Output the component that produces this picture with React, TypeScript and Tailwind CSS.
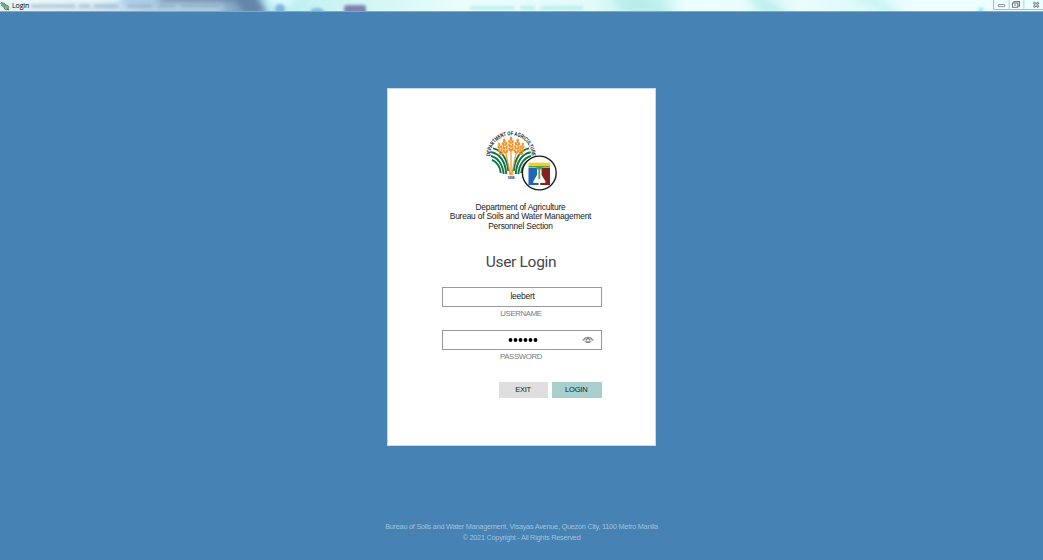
import type { ReactNode } from "react";

function AppIcon() {
  return (
    <svg className="h-[11px] w-[10px] shrink-0" viewBox="0 0 10 11">
      <path d="M0 3 3 2 6 5 4 7 1 5Z" fill="#7fb38a" />
      <path d="M1 2 4 5M4 3 7 6M1 5 5 8" stroke="#4d7f60" strokeWidth=".8" />
      <circle cx="6.4" cy="7.5" r="2.3" fill="#86b583" stroke="#5c7b70" strokeWidth=".8" />
      <path d="m7 9 2 1" stroke="#3d5262" />
    </svg>
  );
}

function TitleBar() {
  return (
    <header className="relative flex h-3 shrink-0 justify-between overflow-hidden border-b border-[#8fa6ae] bg-[linear-gradient(90deg,#e4f3f7_0px,#dcebf3_60px,#c7deec_120px,#a5c6e0_160px,#8fb0cf_225px,#7394b5_252px,#b5e5ee_268px,#c5f3f2_310px,#daf8f7_400px,#eafffc_470px,#e2fbfa_590px,#c5f1ef_635px,#c5f1ef_660px,#ebfffd_685px,#eafefd_740px,#d2f6f4_765px,#e9fefd_800px,#daf9f8_870px,#efffff_920px,#ecffff_1043px)]">
      <svg className="absolute inset-0 h-[11px] w-full" viewBox="0 0 1043 11" preserveAspectRatio="none">
        <defs>
          <filter id="glass" x="-20%" y="-100%" width="140%" height="300%">
            <feGaussianBlur stdDeviation="3" />
          </filter>
          <filter id="glassSmall" x="-20%" y="-100%" width="140%" height="300%">
            <feGaussianBlur stdDeviation="1.5" />
          </filter>
        </defs>
        <g filter="url(#glass)">
          <path d="M130-3H165L145 4H100Z" fill="#a4cce8" />
          <path d="M232-4H254L268 14H246Z" fill="#6485a8" />
          <path d="M160-4H235L245 1H158Z" fill="#5c7d9e" />
          <path d="M0-6H120V2H0Z" fill="#eefcff" />
          <path d="M150 5H222V13H145Z" fill="#b3cfe4" />
          <path d="M262-4H300L290 6H274Z" fill="#d7fcff" />
          <path d="M608-4H640L675 15H628Z" fill="#b5ebe8" opacity=".7" />
          <path d="M746-4H760L792 15H766Z" fill="#bff0ef" />
          <path d="M850-4H875L905 15H887Z" fill="#ccf5f4" />
        </g>
        <g filter="url(#glassSmall)">
          <rect x="344" y="5" width="22" height="10" rx="3" fill="#7f83b2" />
          <circle cx="280" cy="9" r="5" fill="#80b5de" />
          <ellipse cx="317" cy="11" rx="7" ry="3" fill="#80b9df" />
          <circle cx="981" cy="10" r="3" fill="#9feaff" />
          <path d="M470 8H515M520 8H535M540 8H583" stroke="#b0eaec" strokeWidth="3" />
          <path d="M31 6H75M79 6H90M94 6H118M127 6H152M158 6H175M181 6H220" stroke="#86a3bc" strokeWidth="3" opacity=".55" />
        </g>
      </svg>
      <div className="relative flex items-start">
        <AppIcon />
        <span className="ml-[2px] mt-px font-['Open_Sans',sans-serif] text-[7px] leading-[10px] tracking-[-0.1px] text-black">Login</span>
      </div>
      <div className="relative flex h-[10px] w-[50px] rounded-bl-[2px] border-b border-l border-[#a5bec3]">
        <svg className="h-[10px] w-[50px]" viewBox="0 0 50 10" fill="none">
          <path d="M15.5 0V9M30.5 0V9" stroke="#b5cfd2" />
          <rect x="4.5" y="4.5" width="6.5" height="2.2" rx=".5" fill="#fff" stroke="#747e88" strokeWidth=".8" />
          <rect x="20.5" y="1.5" width="5.5" height="4.5" fill="#eef" stroke="#70707f" />
          <rect x="18.8" y="3" width="5.5" height="4.3" fill="#fff" stroke="#70707f" />
          <path d="M20.5 5H22.5" stroke="#70707f" />
          <path d="m40.5 2.3 5 4.8m0-4.8-5 4.8" stroke="#6d7580" strokeWidth="2.4" />
          <path d="m40.8 2.6 4.4 4.2m0-4.2-4.4 4.2" stroke="#eff8fb" strokeWidth=".9" />
        </svg>
      </div>
    </header>
  );
}

function Seals() {
  return (
    <svg className="h-[70px] w-[84px]" viewBox="0 0 84 70" fill="none">
      <defs>
        <path id="sealArc" d="M10.3 30A20.7 20.7 0 0 1 51.7 30V34" />
        <g id="wheat" fill="#f2932a">
          <ellipse cx="0" cy="-13.2" rx="1.3" ry="2.4" />
          <ellipse cx="-1.4" cy="-10" rx="1.2" ry="2.1" transform="rotate(-28 -1.4 -10)" />
          <ellipse cx="1.4" cy="-10" rx="1.2" ry="2.1" transform="rotate(28 1.4 -10)" />
          <ellipse cx="-1.4" cy="-6.3" rx="1.2" ry="2.1" transform="rotate(-28 -1.4 -6.3)" />
          <ellipse cx="1.4" cy="-6.3" rx="1.2" ry="2.1" transform="rotate(28 1.4 -6.3)" />
          <ellipse cx="-1.3" cy="-2.6" rx="1.2" ry="2.1" transform="rotate(-28 -1.3 -2.6)" />
          <ellipse cx="1.3" cy="-2.6" rx="1.2" ry="2.1" transform="rotate(28 1.3 -2.6)" />
        </g>
        <g id="leaves" stroke="#0d7344" strokeWidth="1.9">
          <path d="M28.2 45C27.4 33 21.5 23.8 13 22.4" />
          <path d="M26.2 48C25.6 36 20 27.6 11.2 26.2" />
          <path d="M23.6 48C23 39 18 31.6 11 30" />
          <path d="M20.8 47C20.3 41 16.7 35.5 12 33.8" />
        </g>
      </defs>
      <text className="fill-[#111] font-['Liberation_Sans',sans-serif] text-[5.7px] font-bold">
        <textPath href="#sealArc" textLength="64.5" lengthAdjust="spacingAndGlyphs">DEPARTMENT OF AGRICULTURE</textPath>
      </text>
      <use href="#leaves" />
      <use href="#leaves" transform="translate(62 0) scale(-1 1)" />
      <path d="M31 24V49M25.7 26C26.7 33 29 39 30 49M36.3 26C35.3 33 33 39 32 49" stroke="#f29c3a" strokeWidth="1.3" />
      <use href="#wheat" transform="translate(31 26)" />
      <use href="#wheat" transform="translate(25.9 28) rotate(-7)" />
      <use href="#wheat" transform="translate(36.1 28) rotate(7)" />
      <use href="#wheat" transform="translate(21.6 29.5) rotate(-12) scale(.85)" />
      <use href="#wheat" transform="translate(40.4 29.5) rotate(12) scale(.85)" />
      <text x="31" y="53" textAnchor="middle" className="fill-[#222] font-['Liberation_Sans',sans-serif] text-[3.2px] font-bold">1898</text>
      <circle cx="59.3" cy="47" r="16.9" fill="#fff" stroke="#191919" strokeWidth="1.35" />
      <path d="M48.5 41.8H58.6V59H48.5Z" fill="#2165b5" />
      <path d="M60.2 41.8H70V59H60.2Z" fill="#85211e" />
      <path d="M48.5 36.6H70V40H48.5Z" fill="#f5cf18" />
      <path d="M48.5 40H70V41.5H48.5Z" fill="#4aa35e" />
      <path d="M57 41.5H61.6V49L65.4 55.2Q66 57 64.5 57H54.2Q52.6 57 53.4 55.2L57 49Z" fill="#fff" />
      <path d="M56.5 41V43.4H58.4V53H60.2V43.4H62.1V41Z" fill="#4aa65c" />
    </svg>
  );
}

function Eye() {
  return (
    <svg className="h-2 w-3" viewBox="0 0 12 8" fill="none" stroke="#777">
      <path d="M.7 4.2C3 .3 9 .3 11.3 4.2" strokeWidth="1" />
      <path d="M1 4.5C3.5 2 8.5 2 11 4.5" strokeWidth=".8" />
      <path d="M2.5 5.2C4 7 8 7 9.5 5.2" strokeWidth=".9" />
      <circle cx="6" cy="4.3" r="1.7" strokeWidth=".9" />
    </svg>
  );
}

function Field({ label, children }: { label: string; children: ReactNode }) {
  return (
    <div>
      <div className="relative flex h-5 w-40 items-center justify-center border border-[#999] bg-white">
        {children}
      </div>
      <div className="mt-px pr-[2px] text-center text-[7.8px] leading-[11px] tracking-[-0.35px] text-[#777]">{label}</div>
    </div>
  );
}

export default function App() {
  return (
    <div className="flex h-[560px] w-[1043px] flex-col overflow-hidden bg-[#4682b4] font-['Liberation_Sans',sans-serif]">
      <TitleBar />
      <main className="mt-[76px] flex h-[358px] w-[269px] shrink-0 flex-col items-center self-center border border-[#c7d9e8] bg-white">
        <div className="ml-px mt-[37px] h-[70px]"><Seals /></div>
        <div className="mr-[2px] mt-[7px] whitespace-nowrap text-center text-[8.4px] leading-[9.3px] tracking-[-0.2px] text-[#181818]">
          <p>Department of Agriculture</p>
          <p>Bureau of Soils and Water Management</p>
          <p>Personnel Section</p>
        </div>
        <h1 className="mr-px mt-[19px] h-6 whitespace-nowrap font-['Roboto',sans-serif] text-[15.5px] leading-6 tracking-[-0.3px] text-[#484848]">User Login</h1>
        <div className="ml-px mt-[13px] flex flex-col gap-[11px]">
          <Field label="USERNAME">
            <span className="mb-px ml-px text-[8.5px] leading-[10px] tracking-[-0.25px] text-[#181818]">leebert</span>
          </Field>
          <Field label="PASSWORD">
            <svg className="ml-px mt-px h-1 w-[30px]" viewBox="0 0 30 4" fill="#000">
              <circle cx="2.5" cy="2" r="1.9" /><circle cx="7.5" cy="2" r="1.9" /><circle cx="12.5" cy="2" r="1.9" />
              <circle cx="17.5" cy="2" r="1.9" /><circle cx="22.5" cy="2" r="1.9" /><circle cx="27.5" cy="2" r="1.9" />
            </svg>
            <span className="absolute right-[7px] top-[5px] flex"><Eye /></span>
          </Field>
        </div>
        <div className="ml-px mt-5 flex w-40 justify-end gap-[3.5px] pr-[0.4px] text-[7.6px] tracking-[-0.25px] text-[#222]">
          <button className="h-4 w-[49.7px] bg-[#dfdfdf] pr-px leading-4">EXIT</button>
          <button className="h-4 w-[49.7px] bg-[#a8cecd] pr-px leading-4">LOGIN</button>
        </div>
      </main>
      <footer className="mt-[75px] whitespace-nowrap text-center text-[7.3px] leading-[11px] tracking-[-0.24px] text-[#a3c1da]">
        <p>Bureau of Soils and Water Management, Visayas Avenue, Quezon City, 1100 Metro Manila</p>
        <p>© 2021 Copyright - All Rights Reserved</p>
      </footer>
    </div>
  );
}
